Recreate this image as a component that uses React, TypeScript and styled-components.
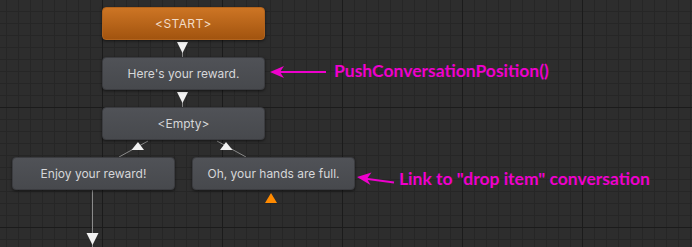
import * as React from "react";
import styled, { createGlobalStyle, css } from "styled-components";

const GlobalStyle = createGlobalStyle`
  html, body {
    margin: 0;
    padding: 0;
    background: #2c2c2c;
    overflow: hidden;
  }
`;

type NodeData = { id: string; label: string; x: number; y: number; start?: boolean };

const nodes: NodeData[] = [
  { id: "start", label: "<START>", x: 102, y: 7, start: true },
  { id: "reward", label: "Here's your reward.", x: 102, y: 57 },
  { id: "empty", label: "<Empty>", x: 102, y: 107 },
  { id: "enjoy", label: "Enjoy your reward!", x: 12, y: 157 },
  { id: "full", label: "Oh, your hands are full.", x: 192, y: 157 },
];

const Canvas = styled.div`
  position: relative;
  width: 692px;
  height: 247px;
  overflow: hidden;
  background-color: #2d2d2d;
  background-image:
    linear-gradient(to right, #1b1b1b 1px, transparent 1px),
    linear-gradient(to bottom, #1b1b1b 1px, transparent 1px),
    linear-gradient(to right, #262626 1px, transparent 1px),
    linear-gradient(to bottom, #262626 1px, transparent 1px);
  background-size: 120px 120px, 120px 120px, 12px 12px, 12px 12px;
  background-position: 102px 0, 0 107px, 6px 0, 0 11px;
`;

const Wires = styled.svg`
  position: absolute;
  left: 0;
  top: 0;
  width: 692px;
  height: 247px;
  pointer-events: none;
`;

const Node = styled.div<{ $x: number; $y: number; $start?: boolean }>`
  position: absolute;
  left: ${(p) => p.$x}px;
  top: ${(p) => p.$y}px;
  width: 163px;
  height: 33px;
  box-sizing: border-box;
  display: flex;
  align-items: center;
  justify-content: center;
  border-radius: 4px;
  font-family: Inter, "DejaVu Sans", sans-serif;
  font-size: 12px;
  box-shadow: 0 1px 3px rgba(0, 0, 0, 0.55);
  ${(p) =>
    p.$start
      ? css`
          background: linear-gradient(to bottom, #cd7524, #a2540f);
          border: 1px solid #b2631c;
          color: #f3dcc6;
          letter-spacing: 0.4px;
        `
      : css`
          background: linear-gradient(to bottom, #505257, #47494d);
          border: 1px solid #3b3c40;
          color: #d6d7d9;
        `}
`;

const Note = styled.div<{ $x: number; $y: number }>`
  position: absolute;
  left: ${(p) => p.$x}px;
  top: ${(p) => p.$y}px;
  white-space: nowrap;
  color: #ee00cc;
  font-family: Lato, "Liberation Sans", sans-serif;
  font-weight: 700;
  font-size: 17.5px;
  line-height: 20px;
`;

const wire = "#8a8a8a";
const pink = "#ee00cc";

export default function App() {
  return (
    <>
      <GlobalStyle />
      <Canvas>
        <Wires viewBox="0 0 692 247">
          <line x1="182.5" y1="52" x2="182.5" y2="57" stroke={wire} />
          <line x1="182.5" y1="102" x2="182.5" y2="107" stroke={wire} />
          <line x1="119" y1="157" x2="148" y2="141" stroke={wire} />
          <line x1="217" y1="141" x2="246" y2="157" stroke={wire} />
          <line x1="92.5" y1="190" x2="92.5" y2="247" stroke={wire} />
          <polygon points="177,42 188,42 182.5,53" fill="#f2f2f2" />
          <polygon points="177,92 188,92 182.5,103" fill="#f2f2f2" />
          <polygon points="138,142 131.5,150 144,150" fill="#f2f2f2" />
          <polygon points="226,142 220,150 232.5,150" fill="#f2f2f2" />
          <polygon points="86.5,233 98.5,233 92.5,245" fill="#f2f2f2" />
          <polygon points="271,193 265,203 277,203" fill="#ff8a00" />

          <line x1="279" y1="72" x2="326" y2="72" stroke={pink} strokeWidth="2" />
          <polygon points="270,72 284,66 280,72 284,78" fill={pink} />
          <line x1="364" y1="178.5" x2="394" y2="182.5" stroke={pink} strokeWidth="2" />
          <polygon points="357,177 371.5,172.5 367,178.8 370.5,185" fill={pink} />
        </Wires>
        {nodes.map((n) => (
          <Node key={n.id} $x={n.x} $y={n.y} $start={n.start}>
            {n.label}
          </Node>
        ))}
        <Note $x={334} $y={61}>PushConversationPosition()</Note>
        <Note $x={399} $y={169}>Link to "drop item" conversation</Note>
      </Canvas>
    </>
  );
}
